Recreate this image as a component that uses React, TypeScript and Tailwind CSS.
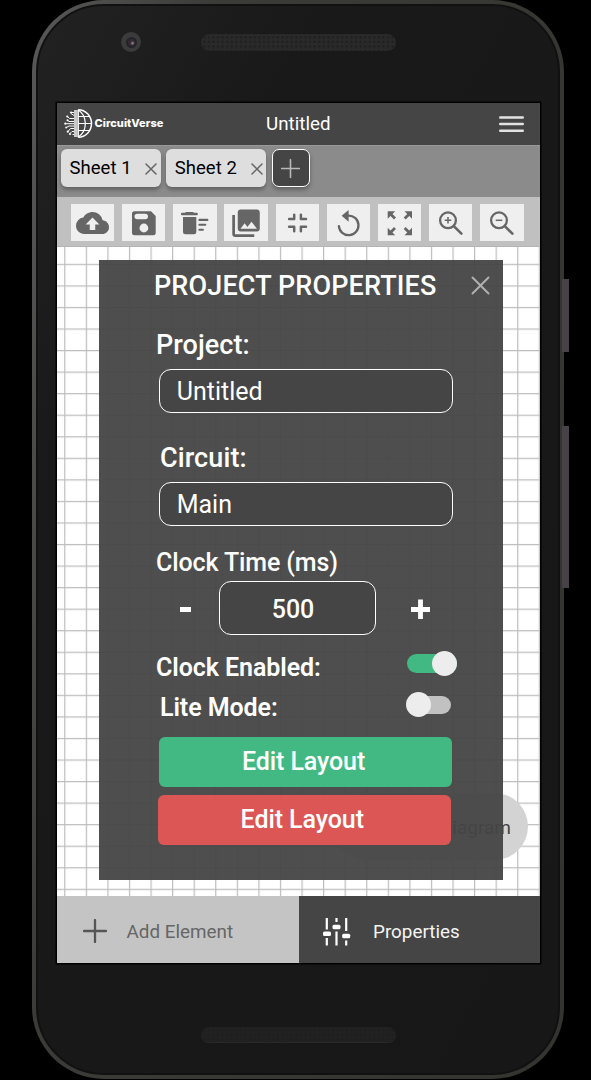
import type { ReactNode } from "react";
import { MdCloudUpload, MdPhotoLibrary } from "react-icons/md";

function Tool({ children }: { children: ReactNode }) {
  return (
    <button className="h-[37px] w-[43.3px] shrink-0 bg-[#efefef] text-[#666]">
      <svg width="43" height="37" viewBox="0 0 43 37" fill="none" stroke="currentColor" strokeWidth="2.3">
        {children}
      </svg>
    </button>
  );
}

function Toolbar() {
  return (
    <div className="flex h-[50px] shrink-0 gap-[7.86px] border-b border-[#b4b4b4] bg-[#c0c0c0] pl-[14px] pt-[7px]">
      <Tool>
        <MdCloudUpload x={5} y={2.5} size={33} stroke="none" />
      </Tool>
      <Tool>
        <path
          fill="currentColor"
          stroke="none"
          fillRule="evenodd"
          d="M12.5 7.3H29l4.7 4.7v16.8a2.5 2.5 0 0 1-2.5 2.5H12.500a2.500 2.500 0 0 1-2.500-2.500V9.800a2.500 2.500 0 0 1 2.500-2.500zM15.300 9.700a2.800 2.800 0 0 0 0 5.600h7.900a2.800 2.800 0 0 0 0-5.600zM21.900 19.600a4.400 4.400 0 1 0 0 8.800a4.400 4.400 0 0 0 0-8.800z"
        />
      </Tool>
      <Tool>
        <g fill="currentColor" stroke="none">
          <path d="M13 8h7l1 .7h2.600a1.300 1.300 0 0 1 0 2.600H9.200a1.300 1.300 0 0 1 0-2.600H12z" />
          <path d="M10 13h13.300v14.800a2.500 2.500 0 0 1-2.500 2.500h-8.300a2.500 2.500 0 0 1-2.500-2.500z" />
        </g>
        <path d="M26.400 15.900h8M26.400 20.700h5.900M26.400 25.800h3.500" strokeWidth="2.100" strokeLinecap="round" />
      </Tool>
      <Tool>
        <MdPhotoLibrary x={5.5} y={2.7} size={33} stroke="none" />
      </Tool>
      <Tool>
        <path
          strokeLinecap="round"
          strokeLinejoin="round"
          strokeWidth="2.500"
          d="M18.200 10.800v4.300h-5.100M24.900 10.800v4.300h5.100M18.200 27.200v-4.500h-5.100M24.900 27.200v-4.500h5.100"
        />
      </Tool>
      <Tool>
        <path d="M21 11.600a9.800 9.800 0 1 1-9.100 10.500" strokeLinecap="round" />
        <path d="M14.600 11.800l7-5.700v11.600z" fill="currentColor" stroke="none" />
      </Tool>
      <Tool>
        <g fill="currentColor" stroke="none">
          <path d="M9.700 7.300h7.500l-7.500 7.500zM34 7.300v7.500l-7.500-7.500zM9.700 31.200v-7.500l7.500 7.500zM34 31.200h-7.500l7.500-7.500z" />
        </g>
        <path d="M12 9.600l5 5M31.700 9.600l-5 5M12 28.900l5-5M31.700 28.900l-5-5" strokeWidth="2.800" />
      </Tool>
      <Tool>
        <circle cx="19" cy="16.300" r="7.900" />
        <path d="M24.800 22.100l7.600 7.600" strokeWidth="2.600" strokeLinecap="round" />
        <path d="M19 13v6.600M15.700 16.300h6.600" strokeWidth="1.500" />
      </Tool>
      <Tool>
        <circle cx="19" cy="16.300" r="7.900" />
        <path d="M24.800 22.100l7.600 7.600" strokeWidth="2.600" strokeLinecap="round" />
        <path d="M15.700 16.300h6.600" strokeWidth="1.500" />
      </Tool>
    </div>
  );
}

function Logo() {
  return (
    <svg className="-ml-[0.500px] mt-[6px] shrink-0" width="29" height="29" viewBox="0 0 29 29" fill="none" stroke="#fff" strokeWidth="1">
      <path d="M14.300 0.800a13.200 13.700 0 0 1 0 27.400" strokeWidth="1.500" />
      <path d="M14.300 1c4.500 3 7 8 7 13.500s-2.500 10.500-7 13.500" strokeWidth="1.200" />
      <path d="M14.300 0.500v28M14.300 7.500h11.200M14.300 14.500h13.200M14.300 21.500h11.200" strokeWidth="1.200" />
      <path d="M11.900 1v27" stroke="#c9c9c9" strokeWidth="3.800" />
      <path d="M10 3.500H8M10 6.500L7 4.500M10 9.500H5.500L3.500 7.500M10 12.500H5L3.800 11.500M10 14.700H1.500M10 17H5l-2.500 1.500M10 19.500H6.500L4 22.500M10 22.500H8l-2 2M10 25.500H8.500" />
      <g fill="#fff" stroke="none">
        <circle cx="7" cy="3.500" r="1.100" />
        <circle cx="3.300" cy="7.500" r="1.100" />
        <circle cx="3.500" cy="11.300" r="1" />
        <circle cx="1.300" cy="14.700" r="1.100" />
        <circle cx="2.200" cy="18.600" r="1" />
        <circle cx="3.800" cy="22.700" r="1.100" />
        <circle cx="6" cy="25" r="1.100" />
      </g>
    </svg>
  );
}

function SheetTab({ label }: { label: string }) {
  return (
    <div className="flex h-[38px] w-[100px] shrink-0 items-center rounded-[6px] bg-[#dedede] pl-[8.300px] text-[18.500px] tracking-[0.050px] text-black shadow-[0_3px_4px_rgba(0,0,0,0.3)]">
      <span className="w-[76px] whitespace-nowrap pt-[2px]">{label}</span>
      <svg className="mt-[1px]" width="12" height="12" viewBox="0 0 12 12" fill="none" stroke="#666" strokeWidth="1.500" strokeLinecap="round">
        <path d="M1 1l10 10M11 1L1 11" />
      </svg>
    </div>
  );
}

function Field({ value }: { value: string }) {
  return (
    <div className="ml-[60.400px] flex h-[44px] w-[293.500px] shrink-0 items-center rounded-[12px] border-[1.300px] border-white bg-[#454545] pl-[16.300px] pt-[2px] text-[25px]">
      {value}
    </div>
  );
}

function PropertiesPanel() {
  return (
    <section className="absolute left-[42px] top-[13px] flex h-[620px] w-[404px] flex-col bg-[#454545]/95 text-white">
      <div className="flex h-[52px] shrink-0 items-center">
        <h1 className="ml-[55px] w-[317px] whitespace-nowrap pt-[1px] text-[27px] font-medium tracking-[0.140px]">PROJECT PROPERTIES</h1>
        <svg className="-mt-[2px]" width="19" height="19" viewBox="0 0 19 19" stroke="#b0b0b0" strokeWidth="2" strokeLinecap="round">
          <path d="M1.500 1.500l16 16M17.500 1.500l-16 16" />
        </svg>
      </div>
      <label className="ml-[57px] mt-[18px] h-[39px] text-[27px] font-medium leading-[30px] tracking-[0.050px]">Project:</label>
      <Field value="Untitled" />
      <label className="ml-[61px] mt-[30px] h-[39px] text-[27px] font-medium leading-[30px] tracking-[0.100px]">Circuit:</label>
      <Field value="Main" />
      <label className="ml-[57px] mt-[22px] h-[33px] text-[25px] font-medium leading-[30px] tracking-[-0.120px]">Clock Time (ms)</label>
      <div className="flex h-[54px] shrink-0 items-center">
        <button className="ml-[81px] mt-[3px] h-[5px] w-[11px] bg-white" aria-label="Decrease" />
        <div className="ml-[28px] flex h-[54px] w-[157px] items-center justify-center rounded-[12px] border-[1.300px] border-white bg-[#454545] pr-[9px] pt-[3px] text-[25px] font-medium">
          500
        </div>
        <svg className="ml-[35px] mt-[2px]" width="19" height="20" viewBox="0 0 19 20" stroke="#fff" strokeWidth="4.800">
          <path d="M0 10.500h19M9.500 0.500v19.500" />
        </svg>
      </div>
      <div className="mt-[17px] flex h-[30px] shrink-0 pl-[57px]">
        <span className="w-[251px] text-[25px] font-semibold leading-[32px] tracking-[-0.070px]">Clock Enabled:</span>
        <div className="mt-[2px] flex h-[19px] w-[50px] items-center justify-end rounded-full bg-[#42b983]">
          <span className="h-[25px] w-[25px] shrink-0 rounded-full bg-[#ededed]" />
        </div>
      </div>
      <div className="mt-[10px] flex h-[30px] shrink-0 pl-[61px]">
        <span className="w-[247px] text-[25px] font-semibold leading-[32px] tracking-[-0.070px]">Lite Mode:</span>
        <div className="mt-[3.500px] flex h-[18.500px] w-[44px] items-center rounded-full bg-[#c1c1c1]">
          <span className="-ml-[1px] h-[25px] w-[25px] shrink-0 rounded-full bg-[#ededed]" />
        </div>
      </div>
      <button className="ml-[60.300px] mt-[15px] h-[50px] w-[292.500px] shrink-0 rounded-[6px] bg-[#42b983] pr-[4px] text-[25px] font-medium tracking-[-0.080px]">
        Edit Layout
      </button>
      <button className="ml-[59px] mt-[8px] h-[50px] w-[292.500px] shrink-0 rounded-[6px] bg-[#dc5656] pr-[4px] text-[25px] font-medium tracking-[-0.080px]">
        Edit Layout
      </button>
    </section>
  );
}

function Canvas() {
  return (
    <div className="relative h-[649px] shrink-0 bg-white">
      <svg className="block" width="483" height="649">
        <defs>
          <pattern id="grid" x="7.200" y="16.800" width="21.570" height="21.550" patternUnits="userSpaceOnUse">
            <path d="M0.600 0v21.600M0 0.600h21.600" stroke="#000" strokeOpacity="0.260" strokeWidth="1.200" />
          </pattern>
        </defs>
        <rect width="483" height="649" fill="url(#grid)" />
      </svg>
      <button className="absolute left-[275px] top-[546px] h-[67px] w-[196px] rounded-full bg-[#d3d3d3] pr-[17px] pt-[3px] text-right text-[19px] text-[#444]">
        Timing Diagram
      </button>
      <PropertiesPanel />
    </div>
  );
}

function BottomBar() {
  return (
    <div className="flex h-[67px] shrink-0 text-[18.850px]">
      <button className="flex w-[242px] items-center bg-[#c4c4c4] pl-[26px] pt-[3px] text-[#666]">
        <svg width="24" height="24" viewBox="0 0 24 24" stroke="#555" strokeWidth="2.300" strokeLinecap="round">
          <path d="M1 12h22M12 1v22" />
        </svg>
        <span className="ml-[19.500px] mt-[2px]">Add Element</span>
      </button>
      <button className="flex w-[241px] items-center bg-[#454545] pl-[24px] pt-[3px] text-[#f4f4f4]">
        <svg className="mt-[2px]" width="28" height="28" viewBox="0 0 28 28" fill="#fff">
          <path d="M2.700 0h2.200v11.500H2.700zM2.700 20h2.200v7.500H2.700zM12.400 0h2.200v4h-2.200zM12.400 13.500h2.200v14h-2.200zM22.100 0h2.200v13h-2.200zM22.100 22.500h2.200v5h-2.200z" />
          <rect x="0" y="13.400" width="8" height="4.500" rx="1.500" />
          <rect x="9.500" y="6.700" width="8" height="4.500" rx="1.500" />
          <rect x="19.200" y="15.800" width="8" height="4.500" rx="1.500" />
        </svg>
        <span className="ml-[22px] mt-[2px]">Properties</span>
      </button>
    </div>
  );
}

function Speaker({ className }: { className: string }) {
  return (
    <div
      className={`rounded-full bg-[radial-gradient(circle_at_center,#1d1d1d_0.800px,transparent_1.300px)] bg-[length:4.600px_4.600px] bg-[position:1px_1px] ${className}`}
    />
  );
}

export default function App() {
  return (
    <main className="relative h-[1080px] w-[591px] overflow-hidden bg-black font-['Roboto',sans-serif]">
      <div className="absolute left-[562px] top-[279px] h-[73px] w-[7px] bg-[#464247]" />
      <div className="absolute left-[562px] top-[426px] h-[162px] w-[7px] bg-[#464247]" />
      <div className="ml-[32px] h-[1079px] w-[532px] rounded-[72px] bg-[linear-gradient(100deg,#585858,#3b3c38_25%,#33342f)] p-[4px]">
        <div className="flex h-full flex-col rounded-[68px] border-2 border-[#111] bg-[linear-gradient(120deg,#222_0%,#191919_25%,#171717_100%)]">
          <div className="flex h-[97px] shrink-0 pl-[83.400px] pt-[26px]">
            <div className="flex h-[20px] w-[20px] items-center justify-center rounded-full bg-[#3b3b3b]">
              <span className="h-[11px] w-[11px] rounded-full border-2 border-[#252328] bg-[radial-gradient(circle_at_65%_60%,#8b777b_10%,#332b34_35%)]" />
            </div>
            <Speaker className="ml-[60px] mt-[2px] h-[17px] w-[195px] bg-[#292929]" />
          </div>
          <div className="ml-[19px] h-[860px] w-[483px] shrink-0 shadow-[0_0_0_1.500px_#000]">
            <header className="flex h-[42px] bg-[#454545] pl-[7px] text-white">
              <Logo />
              <span className="ml-[2px] mt-[12px] w-[171.500px] font-['Inter',sans-serif] text-[11px] font-extrabold leading-[16px] tracking-[0.050px]">
                CircuitVerse
              </span>
              <span className="w-[233px] text-[18.800px] leading-[42px]">Untitled</span>
              <svg className="mt-[13px]" width="25" height="16" viewBox="0 0 25 16" stroke="#e2e2e2" strokeWidth="2.400" strokeLinecap="round">
                <path d="M1.200 1.500h22.600M1.200 8h22.600M1.200 14.800h22.600" />
              </svg>
            </header>
            <nav className="flex h-[52px] gap-[5.200px] border-t border-[#999] bg-[#8b8b8b] pl-[4.200px] pt-[3px]">
              <SheetTab label="Sheet 1" />
              <SheetTab label="Sheet 2" />
              <button className="flex h-[38px] w-[38px] items-center justify-center rounded-[7px] border-[1.400px] border-white bg-[#454545] shadow-[0_3px_4px_rgba(0,0,0,0.3)]">
                <svg width="19" height="19" viewBox="0 0 19 19" stroke="#b8b8b8" strokeWidth="1.600" strokeLinecap="round">
                  <path d="M0.700 9.500h17.600M9.500 0.700v17.600" />
                </svg>
              </button>
            </nav>
            <Toolbar />
            <Canvas />
            <BottomBar />
          </div>
          <Speaker className="ml-[163px] mt-[64px] h-[16px] w-[195px] shrink-0 border-b border-[#292929] bg-[#212121]" />
        </div>
      </div>
    </main>
  );
}
